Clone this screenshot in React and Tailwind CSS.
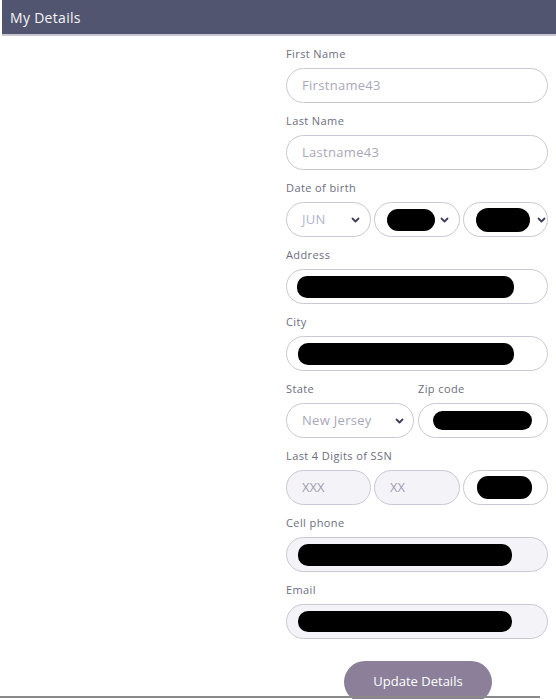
import React from "react";

const font = { fontFamily: "'Open Sans', 'Liberation Sans', sans-serif" };

function Chevron() {
  return (
    <svg width="9" height="6" viewBox="0 0 9 6" className="shrink-0">
      <path d="M1.5 1.5 L4.5 4.5 L7.5 1.5" fill="none" stroke="#3d3f57" strokeWidth="1.8" strokeLinecap="round" strokeLinejoin="round" />
    </svg>
  );
}

function Label({ children }) {
  return <div className="text-[11px] leading-[14px] tracking-[0.4px] text-[#6e6e7e] h-[14px]">{children}</div>;
}

function Pill({ className = "", children }) {
  return (
    <div className={"h-[35px] rounded-full border border-[#c9c8d4] flex items-center " + className}>
      {children}
    </div>
  );
}

function Blob({ className = "" }) {
  return <div className={"bg-black rounded-[10px] " + className} />;
}

const ph = "text-[13px] tracking-[0.3px] text-[#a9a8b8]";

export default function App() {
  return (
    <div className="w-[556px] h-[699px] bg-white overflow-hidden relative" style={font}>
      <div className="h-[36px] bg-[#52556f] border-b-2 border-[#c8c8d2] ml-[2px] flex items-center pl-[8px]">
        <span className="text-white text-[14px] tracking-[0.3px] opacity-95">My Details</span>
      </div>
      <div className="flex">
        <div className="w-[286px] shrink-0" />
        <div className="w-[262px] flex flex-col pt-[11px]">
          <Label>First Name</Label>
          <Pill className="mt-[7px] pl-[15px]">
            <span className={ph}>Firstname43</span>
          </Pill>
          <div className="mt-[11px]"><Label>Last Name</Label></div>
          <Pill className="mt-[7px] pl-[15px]">
            <span className={ph}>Lastname43</span>
          </Pill>
          <div className="mt-[11px]"><Label>Date of birth</Label></div>
          <div className="mt-[7px] flex gap-[3px]">
            <Pill className="w-[85px] pl-[15px] pr-[10px] justify-between">
              <span className="text-[13px] tracking-[0.3px] text-[#b0b4d0]">JUN</span>
              <Chevron />
            </Pill>
            <Pill className="w-[86px] pl-[12px] pr-[10px] justify-between">
              <Blob className="w-[48px] h-[22px] rounded-[11px]" />
              <Chevron />
            </Pill>
            <Pill className="w-[85px] pl-[12px] pr-[1px] justify-between">
              <Blob className="w-[54px] h-[24px] rounded-[12px]" />
              <Chevron />
            </Pill>
          </div>
          <div className="mt-[11px]"><Label>Address</Label></div>
          <Pill className="mt-[7px] pl-[10px]">
            <Blob className="w-[217px] h-[22px]" />
          </Pill>
          <div className="mt-[11px]"><Label>City</Label></div>
          <Pill className="mt-[7px] pl-[11px]">
            <Blob className="w-[216px] h-[22px]" />
          </Pill>
          <div className="mt-[11px] flex">
            <div className="w-[132px]"><Label>State</Label></div>
            <Label>Zip code</Label>
          </div>
          <div className="mt-[7px] flex gap-[4px]">
            <Pill className="w-[128px] pl-[15px] pr-[9px] justify-between">
              <span className={ph}>New Jersey</span>
              <Chevron />
            </Pill>
            <Pill className="flex-1 pl-[14px]">
              <Blob className="w-[99px] h-[19px]" />
            </Pill>
          </div>
          <div className="mt-[11px]"><Label>Last 4 Digits of SSN</Label></div>
          <div className="mt-[7px] flex gap-[3px]">
            <Pill className="w-[85px] pl-[15px] bg-[#f4f4f8]">
              <span className="text-[13px] text-[#a0a0b0]">XXX</span>
            </Pill>
            <Pill className="w-[86px] pl-[15px] bg-[#f4f4f8]">
              <span className="text-[13px] text-[#a0a0b0]">XX</span>
            </Pill>
            <Pill className="w-[85px] pl-[13px]">
              <Blob className="w-[55px] h-[23px] rounded-[11px]" />
            </Pill>
          </div>
          <div className="mt-[11px]"><Label>Cell phone</Label></div>
          <Pill className="mt-[7px] pl-[11px] bg-[#f4f4f8]">
            <Blob className="w-[214px] h-[22px]" />
          </Pill>
          <div className="mt-[11px]"><Label>Email</Label></div>
          <Pill className="mt-[7px] pl-[11px] bg-[#f4f4f8]">
            <Blob className="w-[214px] h-[21px]" />
          </Pill>
          <div className="mt-[22px] flex pl-[58px]">
            <div className="w-[148px] h-[42px] rounded-full bg-[#8b7f99] flex items-start justify-center pt-[11px]">
              <span className="text-white text-[13px]">Update Details</span>
            </div>
          </div>
        </div>
      </div>
      <div className="absolute left-0 top-[696px] w-[540px] h-[2px] bg-[#8a8a8a]" />
    </div>
  );
}
